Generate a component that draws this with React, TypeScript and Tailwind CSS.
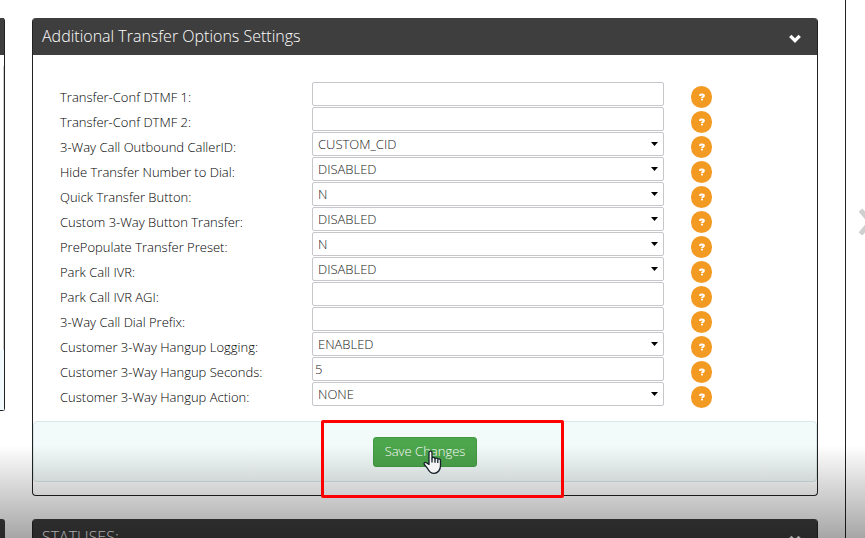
import { useState } from 'react';

type Field = {
  id: string;
  label: string;
  type: 'text' | 'select';
  value: string;
  options?: string[];
};

const initialFields: Field[] = [
  { id: 'xferconf_dtmf_1', label: 'Transfer-Conf DTMF 1:', type: 'text', value: '' },
  { id: 'xferconf_dtmf_2', label: 'Transfer-Conf DTMF 2:', type: 'text', value: '' },
  { id: 'outbound_cid', label: '3-Way Call Outbound CallerID:', type: 'select', value: 'CUSTOM_CID', options: ['CUSTOM_CID', 'CAMPAIGN', 'CUSTOMER'] },
  { id: 'hide_xfer_number', label: 'Hide Transfer Number to Dial:', type: 'select', value: 'DISABLED', options: ['DISABLED', 'ENABLED'] },
  { id: 'quick_transfer', label: 'Quick Transfer Button:', type: 'select', value: 'N', options: ['N', 'Y'] },
  { id: 'custom_3way', label: 'Custom 3-Way Button Transfer:', type: 'select', value: 'DISABLED', options: ['DISABLED', 'ENABLED'] },
  { id: 'prepopulate_preset', label: 'PrePopulate Transfer Preset:', type: 'select', value: 'N', options: ['N', 'Y'] },
  { id: 'park_ivr', label: 'Park Call IVR:', type: 'select', value: 'DISABLED', options: ['DISABLED', 'ENABLED'] },
  { id: 'park_ivr_agi', label: 'Park Call IVR AGI:', type: 'text', value: '' },
  { id: 'dial_prefix', label: '3-Way Call Dial Prefix:', type: 'text', value: '' },
  { id: 'hangup_logging', label: 'Customer 3-Way Hangup Logging:', type: 'select', value: 'ENABLED', options: ['ENABLED', 'DISABLED'] },
  { id: 'hangup_seconds', label: 'Customer 3-Way Hangup Seconds:', type: 'text', value: '5' },
  { id: 'hangup_action', label: 'Customer 3-Way Hangup Action:', type: 'select', value: 'NONE', options: ['NONE', 'DISPO'] }
];

function PanelHeader({ title }: { title: string }) {
  return (
    <div className="flex h-[37px] items-center justify-between rounded-t-[3px] bg-[#3e3e3e] pl-[9px] pr-4">
      <h2 className="pb-0.5 text-[16px] font-light leading-6 text-white">{title}</h2>
      <button type="button" aria-label="Toggle panel" className="mt-1">
        <svg width="12" height="10" viewBox="0 0 12 10" fill="none" stroke="#fff" strokeWidth="3.4">
          <path d="M1.300 1.900 6 6.600l4.700-4.700" />
        </svg>
      </button>
    </div>
  );
}

function FieldRow({ field, onChange }: { field: Field; onChange: (value: string) => void }) {
  const control = 'block h-6 w-full rounded-[2px] border border-[#c6c6cb] bg-white text-[13px] font-light leading-5 text-[#222]';

  return (
    <div className="grid h-[25px] grid-cols-[252fr_352fr_153fr]">
      <label htmlFor={field.id} className="pt-1 text-[13px] font-light leading-[22px] text-black">
        {field.label}
      </label>
      <div className="relative">
        {field.type === 'select' ? (
          <>
            <select
              id={field.id}
              value={field.value}
              onChange={(e) => onChange(e.target.value)}
              className={`${control} appearance-none pl-[5px] pr-5`}
            >
              {field.options?.map((option) => (
                <option key={option}>{option}</option>
              ))}
            </select>
            <svg className="pointer-events-none absolute right-[6px] top-[10px]" width="7" height="4" viewBox="0 0 7 4">
              <path d="M0 0h7L3.5 4z" fill="#000" />
            </svg>
          </>
        ) : (
          <input
            id={field.id}
            type="text"
            value={field.value}
            onChange={(e) => onChange(e.target.value)}
            className={`${control} px-[2px]`}
          />
        )}
      </div>
      <div className="pl-[27px] pt-1">
        <button
          type="button"
          aria-label={`Help: ${field.label}`}
          className="flex h-[22px] w-[21px] items-center justify-center rounded-full bg-[#f39a22]"
        >
          <svg width="6" height="8" viewBox="0 0 7 8" fill="none" stroke="#fff" strokeWidth="2.300">
            <path d="M.9 2.700C1 1.500 2 1 3.300 1c1.400 0 2.400.600 2.400 1.500 0 1.300-2.200 1.300-2.200 2.900" />
            <path d="M2.300 7.100h2.400" strokeWidth="1.7" />
          </svg>
        </button>
      </div>
    </div>
  );
}

function HandCursor() {
  return (
    <svg
      className="pointer-events-none absolute left-[50px] top-[13px] z-20"
      width="19"
      height="25"
      viewBox="0 0 19 25"
      fill="#f4f4f4"
      stroke="#15202b"
      strokeWidth="1.3"
      strokeLinejoin="round"
    >
      <path d="M6 14.500V2.600C6 .5 9 .5 9 2.600v5.600c.3-1.200 2.800-1 3 .4.500-.9 2.600-.7 2.800.6.700-.7 2.700-.4 2.700 1.400v5.200c0 3.800-2.500 7.500-6.500 7.500-3.300 0-5-2-6.300-4.600L1.300 14.500c-.8-1.600.8-2.700 2.100-1.700z" />
      <path d="M9 8v4.500M12 8.700v4M14.800 9.500v3.500" />
    </svg>
  );
}

export default function App() {
  const [fields, setFields] = useState(initialFields);

  const updateField = (id: string, value: string) => {
    setFields(fields.map((f) => (f.id === id ? { ...f, value } : f)));
  };

  return (
    <div className="relative flex h-screen overflow-hidden bg-white font-['Open_Sans',sans-serif]">
      {/* edge of the neighbouring column */}
      <div className="w-[5px] shrink-0 pt-[18px]">
        <div className="flex h-[393px] flex-col rounded-r-[3px] border-b border-r border-[#222] bg-white">
          <div className="h-[37px] bg-[#3e3e3e]" />
          <div className="mt-[11px] flex-1 border-r border-[#ccc]" />
          <div className="h-[60px] bg-[#f0f9fb]" />
        </div>
        <div className="mt-[108px] h-[37px] rounded-tr-[3px] bg-[#3e3e3e]" />
      </div>

      <main className="min-w-0 flex-1 border-r border-[#222] px-[27px] pt-[18px]">
        <section className="rounded-[4px] border border-t-0 border-[#222]">
          <PanelHeader title="Additional Transfer Options Settings" />
          <form onSubmit={(e) => e.preventDefault()}>
            <div className="pb-[14px] pl-[27px] pt-[27px]">
              {fields.map((field) => (
                <FieldRow key={field.id} field={field} onChange={(value) => updateField(field.id, value)} />
              ))}
            </div>
            <div className="mb-[13px] flex h-[61px] justify-center rounded-[4px] border border-[#d9e8e8] bg-[#f3fafa] pt-[15px]">
              <div className="relative h-fit">
                <button
                  type="submit"
                  className="block h-[30px] rounded-[3px] border border-[#439a43] bg-[#4ca64c] px-[11px] pb-0.5 text-[13px] font-light leading-5 text-white"
                >
                  Save Changes
                </button>
                <HandCursor />
                <div className="pointer-events-none absolute -left-[52px] -top-[17px] z-20 h-[78px] w-[243px] rounded-[2px] border-[3px] border-[#f00]" />
              </div>
            </div>
          </form>
        </section>

        <section className="mt-[23px] rounded-[4px] border border-t-0 border-[#222]">
          <PanelHeader title="STATUSES:" />
        </section>
      </main>

      <div className="flex w-[19px] shrink-0 justify-end overflow-hidden pt-[208px]">
        <svg className="-mr-[8px] shrink-0" width="14" height="28" viewBox="0 0 14 28" fill="none" stroke="#cfcfcf" strokeWidth="5">
          <path d="M1.500 2l10 12-10 12" />
        </svg>
      </div>

      <div className="pointer-events-none absolute inset-x-0 bottom-0 z-10 h-[93px] bg-linear-to-b from-transparent to-black/35" />
    </div>
  );
}
